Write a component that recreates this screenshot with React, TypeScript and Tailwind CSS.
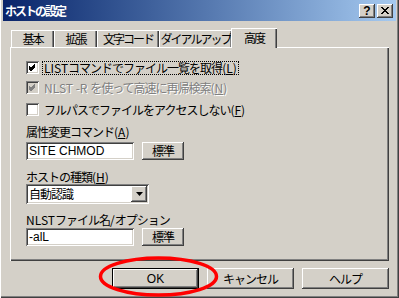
import type { ReactNode } from "react";

const FONT = "font-['Noto_Sans_CJK_JP','MS_UI_Gothic',sans-serif]";
const RAISED =
  "bg-[#d4d0c8] shadow-[inset_-1px_-1px_#404040,inset_1px_1px_#ffffff,inset_-2px_-2px_#808080,inset_2px_2px_#d4d0c8]";
const SUNKEN =
  "bg-white shadow-[inset_1px_1px_#808080,inset_-1px_-1px_#ffffff,inset_2px_2px_#404040,inset_-2px_-2px_#d4d0c8]";

const TABS = [
  { label: "基本", w: "w-[43px]" },
  { label: "拡張", w: "w-[43px]" },
  { label: "文字コード", w: "w-[62px]" },
  { label: "ダイアルアップ", w: "w-[73px]" },
];

// latin runs keep normal spacing, only the kana/kanji get squeezed
function L({ children }: { children: ReactNode }) {
  return <span className="tracking-normal">{children}</span>;
}

function Check({ checked, disabled }: { checked?: boolean; disabled?: boolean }) {
  return (
    <span
      className={
        "relative w-[13px] h-[13px] shrink-0 " +
        (disabled
          ? "bg-[#d4d0c8] shadow-[inset_1px_1px_#808080,inset_-1px_-1px_#ffffff,inset_2px_2px_#404040,inset_-2px_-2px_#d4d0c8]"
          : SUNKEN)
      }
    >
      {checked && (
        <svg className="absolute left-[2px] top-[2px]" width="9" height="9" viewBox="0 0 9 9">
          <path
            d="M1 3.5 L3 5.5 L7 1.5 M1 4.5 L3 6.5 L7 2.5 M1 5.5 L3 7.5 L7 3.5"
            stroke={disabled ? "#808080" : "#000"}
            strokeWidth="1"
            fill="none"
            shapeRendering="crispEdges"
          />
        </svg>
      )}
    </span>
  );
}

function Btn({ children, className = "" }: { children: ReactNode; className?: string }) {
  return (
    <div className={`${RAISED} flex items-center justify-center text-[12px] text-black whitespace-nowrap ${className}`}>
      {children}
    </div>
  );
}

function Field({ value, className = "" }: { value: string; className?: string }) {
  return (
    <div
      className={`${SUNKEN} h-[18px] flex items-center pl-[3px] text-[12px] text-black tracking-normal font-['Liberation_Sans',sans-serif] ${className}`}
    >
      {value}
    </div>
  );
}

export default function App() {
  return (
    <div
      className={`${FONT} relative w-[399px] h-[298px] overflow-hidden bg-[#d4d0c8] px-[3px] shadow-[inset_1px_0_#ffffff,inset_-1px_-1px_#404040,inset_-2px_-2px_#808080] text-black leading-none tracking-[-1px] whitespace-nowrap`}
    >
      {/* title bar */}
      <div className="h-[21px] flex items-center bg-gradient-to-r from-[#0a246a] to-[#a6caf0] pl-[2px] pr-[3px]">
        <span className="text-white text-[12px] font-bold tracking-[-2px]">ホストの設定</span>
        <div className="ml-auto flex gap-[2px] tracking-normal">
          <Btn className="w-[16px] h-[14px] font-bold font-['Liberation_Sans',sans-serif]">?</Btn>
          <Btn className="w-[16px] h-[14px]">
            <svg width="8" height="7" viewBox="0 0 8 7">
              <path d="M0 0 L7 7 M1 0 L8 7 M7 0 L0 7 M8 0 L1 7" stroke="#000" strokeWidth="1" shapeRendering="crispEdges" />
            </svg>
          </Btn>
        </div>
      </div>

      {/* tabs */}
      <div className="mt-[7px] ml-[8px] flex items-end h-[19px]">
        {TABS.map((t) => (
          <div
            key={t.label}
            className={`${t.w} h-[17px] flex items-center justify-center text-[12px] tracking-[-2px] shadow-[inset_1px_1px_#ffffff,inset_-1px_0_#404040,inset_-2px_0_#808080]`}
          >
            {t.label}
          </div>
        ))}
        <div className="relative z-10 -ml-[1px] w-[46px] h-[20px] -mb-[1px] bg-[#d4d0c8] flex items-center justify-center text-[12px] tracking-[-2px] pb-[1px] shadow-[inset_1px_1px_#ffffff,inset_-1px_0_#404040,inset_-2px_0_#808080]">
          高度
        </div>
      </div>

      {/* panel */}
      <div className="ml-[7px] w-[379px] h-[214px] shadow-[inset_1px_1px_#ffffff,inset_-1px_-1px_#404040,inset_-2px_-2px_#808080] pl-[16px] pt-[14px] text-[12px]">
        <label className="flex items-center gap-[3px] h-[13px]">
          <Check checked />
          <span className="border border-dotted border-black px-[1px] leading-[12px]">
            <L>LIST</L>コマンドでファイル一覧を取得<L>(<u>L</u>)</L>
          </span>
        </label>
        <label className="flex items-center gap-[4px] h-[13px] mt-[7px]">
          <Check checked disabled />
          <span className="text-[#808080] [text-shadow:1px_1px_#ffffff] pl-[1px]">
            <L>NLST -R </L>を使って高速に再帰検索<L>(<u>N</u>)</L>
          </span>
        </label>
        <label className="flex items-center gap-[4px] h-[13px] mt-[9px]">
          <Check />
          <span className="pl-[1px]">
            フルパスでファイルをアクセスしない<L>(<u>F</u>)</L>
          </span>
        </label>

        <div className="mt-[10px] h-[12px]">
          属性変更コマンド<L>(<u>A</u>)</L>
        </div>
        <div className="mt-[4px] flex gap-[8px]">
          <Field value="SITE CHMOD" className="w-[108px]" />
          <Btn className="w-[42px] h-[18px]">標準</Btn>
        </div>

        <div className="mt-[11px] h-[12px]">
          ホストの種類<L>(<u>H</u>)</L>
        </div>
        <div className={`${SUNKEN} mt-[1px] w-[123px] h-[20px] flex items-center pl-[3px] pr-[2px]`}>
          <span>自動認識</span>
          <Btn className="ml-auto w-[16px] h-[16px]">
            <svg width="7" height="4" viewBox="0 0 7 4">
              <path d="M0 0 H7 L3.5 4 Z" fill="#000" />
            </svg>
          </Btn>
        </div>

        <div className="mt-[10px] h-[12px]">
          <L>NLST</L>ファイル名<L>/</L>オプション
        </div>
        <div className="mt-[2px] flex gap-[8px]">
          <Field value="-alL" className="w-[108px]" />
          <Btn className="w-[42px] h-[18px]">標準</Btn>
        </div>
      </div>

      {/* bottom buttons */}
      <div className="mt-[7px] flex gap-[8px]">
        <div className="ml-[109px] border border-black">
          <Btn className="w-[85px] h-[19px] font-['Liberation_Sans',sans-serif] tracking-normal">OK</Btn>
        </div>
        <Btn className="w-[87px] h-[21px]">キャンセル</Btn>
        <Btn className="w-[87px] h-[21px]">ヘルプ</Btn>
      </div>

      {/* red ellipse annotation */}
      <svg className="absolute left-0 top-0 pointer-events-none" width="399" height="298">
        <ellipse cx="158.5" cy="276.5" rx="58" ry="18.5" fill="none" stroke="#ff0000" strokeWidth="3.5" />
      </svg>
    </div>
  );
}
